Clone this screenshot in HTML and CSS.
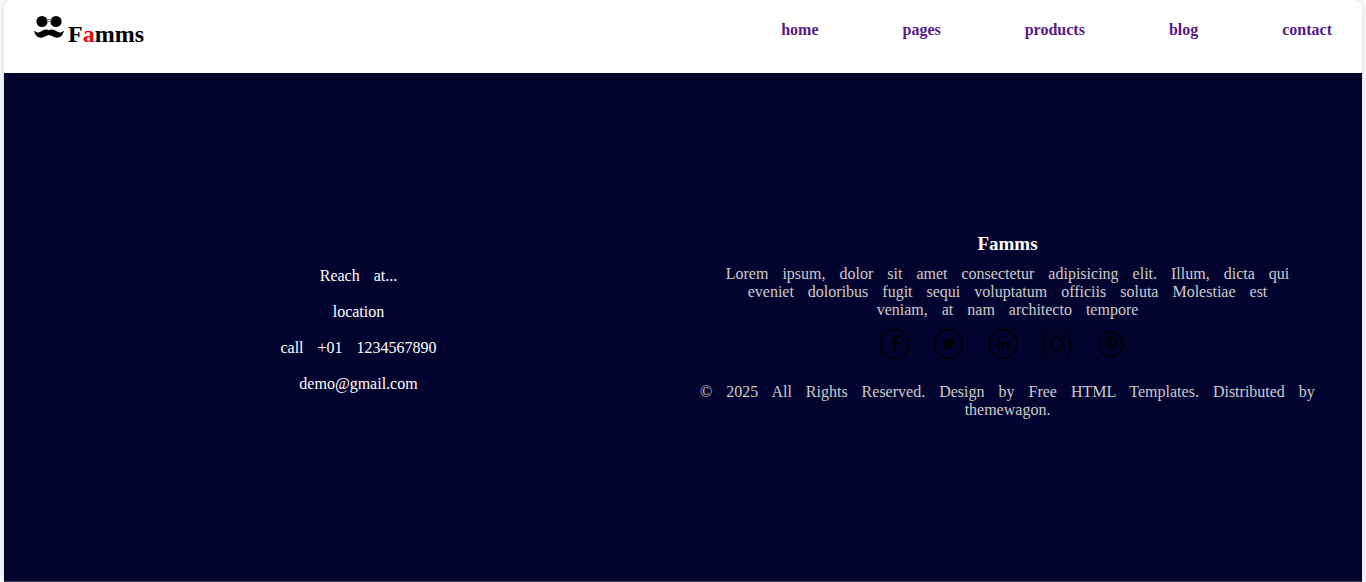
FILE: index.html
```html
<!DOCTYPE html>
<html lang="en">
<head>
<meta charset="utf-8">
<title>Famms</title>
<link rel="stylesheet" href="styles.css">
</head>
<body>
<div class="page">
  <header class="header">
    <div class="brand">
      <svg class="brand-mark" viewBox="0 0 30 24" aria-hidden="true">
        <circle cx="8" cy="6.500" r="5.600"/>
        <circle cx="22" cy="6.500" r="5.600"/>
        <path class="bridge" d="M12 4.500h6M12.500 6.500h5"/>
        <path d="M.3 15.300c1.400 2.200 3.200 2.600 5.500 1.600 2.500-1.100 4.300-2.500 6.500-2.500 1.200 0 2.100.4 2.700 1 .6-.6 1.500-1 2.700-1 2.200 0 4 1.400 6.500 2.500 2.300 1 4.100.6 5.500-1.600-.1 4.600-3 7.400-7 7.400-3.300 0-5.200-2.600-7.700-2.600s-4.400 2.600-7.700 2.600c-4 0-6.900-2.800-7-7.400z"/>
      </svg>
      <span class="brand-name">F<span class="brand-accent">a</span>mms</span>
    </div>
    <nav class="nav">
      <a href="#">home</a>
      <a href="#">pages</a>
      <a href="#">products</a>
      <a href="#">blog</a>
      <a href="#">contact</a>
    </nav>
  </header>
  <footer class="footer">
    <address class="reach">
      <p>Reach at...</p>
      <p>location</p>
      <p>call +01 1234567890</p>
      <p>demo@gmail.com</p>
    </address>
    <section class="about">
      <h3>Famms</h3>
      <p class="summary">Lorem ipsum, dolor sit amet consectetur adipisicing elit. Illum, dicta qui eveniet doloribus fugit sequi voluptatum officiis soluta Molestiae est veniam, at nam architecto tempore</p>
      <div class="social">
        <a href="#" aria-label="Facebook"><svg viewBox="0 0 30 30"><circle class="line" cx="15" cy="15" r="14.200"/><path d="M13.200 23.500v-7.700h-2.300v-3h2.300v-2.300c0-2.700 1.500-4 3.900-4 .8 0 1.500.1 1.900.2v2.600h-1.400c-1.200 0-1.500.6-1.500 1.600v1.900h2.800l-.4 3h-2.400v7.700z"/></svg></a>
        <a href="#" aria-label="Twitter"><svg viewBox="0 0 30 30"><circle class="line" cx="15" cy="15" r="14.200"/><path d="M22 10.500c-.5.200-1 .4-1.600.5.600-.4 1-.9 1.200-1.500-.5.300-1.100.5-1.700.7a2.900 2.900 0 0 0-5 2.600c-2.300-.1-4.400-1.200-5.800-3a2.900 2.900 0 0 0 .9 3.800c-.5 0-.9-.2-1.300-.4 0 1.400 1 2.600 2.300 2.800-.4.100-.8.100-1.300.1.400 1.100 1.400 2 2.700 2a5.700 5.700 0 0 1-4.100 1.200c4.900 3.100 12.400.4 12.200-7.300.6-.4 1.100-.9 1.500-1.500z"/></svg></a>
        <a href="#" aria-label="LinkedIn"><svg viewBox="0 0 30 30"><circle class="line" cx="15" cy="15" r="14.200"/><circle cx="10.800" cy="10.700" r="1.300"/><path d="M9.600 13H12v7.200H9.600zM13.600 13h2.300v1c.4-.7 1.200-1.200 2.200-1.200 2.300 0 3 1.400 3 3.500v3.900h-2.400v-3.500c0-1.100-.3-1.700-1.200-1.700s-1.500.6-1.500 1.700v3.500h-2.400z"/></svg></a>
        <a href="#" aria-label="Instagram"><svg viewBox="0 0 30 30"><path class="hairline" d="M4.500 1.500h21M4.500 28.500h21"/><path d="M3 4V26C.3 22.500.3 7.500 3 4zM27 4V26c2.700-3.500 2.700-18.500 0-22z"/><path class="line" d="M2.500 4.500l2-3M27.500 4.500l-2-3M2.500 25.500l2 3M27.500 25.500l-2 3"/><circle class="ring" cx="15" cy="15" r="6"/><circle cx="22.500" cy="7.500" r="1.800"/></svg></a>
        <a href="#" aria-label="Pinterest"><svg viewBox="0 0 30 30"><circle class="line" cx="15" cy="15" r="12.200"/><path class="stroke" d="M11 16.500c-3.200-4 .3-8 4.300-8 4.300 0 6 3.400 4.800 6.500-1 3-4.600 3.900-6 1.600M15.400 11.800L12.500 22"/></svg></a>
      </div>
      <p class="copyright">© 2025 All Rights Reserved. Design by Free HTML Templates. Distributed by themewagon.</p>
    </section>
  </footer>
</div>
</body>
</html>
```
FILE: styles.css
```css
* {
  box-sizing: border-box;
}

body {
  margin: 0;
  padding: 0 4px;
  background: #fff;
  font: 16px/18px "Liberation Serif", "Times New Roman", serif;
}

h3,
p {
  margin: 0;
}

.page {
  display: flex;
  flex-direction: column;
  min-height: 100vh;
  border-bottom: 1px solid #41415f;
  border-radius: 8px 8px 0 0;
  box-shadow: 0 0 8px rgba(0, 0, 0, 0.2);
}

.header {
  display: flex;
  justify-content: space-between;
  align-items: flex-start;
  padding: 15px 30px 25px;
}

.brand {
  display: flex;
  gap: 4px;
}

.brand-mark {
  width: 30px;
  height: 24px;
}

.bridge {
  fill: none;
  stroke: #777;
}

.brand-name {
  padding-top: 5px;
  font-size: 24px;
  font-weight: bold;
  line-height: 28px;
}

.brand-accent {
  color: #f00;
}

.nav {
  display: flex;
  gap: 84px;
  padding-top: 6px;
  font-weight: bold;
}

.nav a {
  color: #551a8b;
  text-decoration: none;
}

.footer {
  flex: 1;
  display: grid;
  grid-template-columns: 1fr 1fr;
  align-items: center;
  padding: 0 30px 2px;
  background: #030330;
  color: #fff;
  text-align: center;
  word-spacing: 10px;
}

.reach {
  display: grid;
  gap: 18px;
  padding-top: 8px;
  font-style: normal;
}

.about {
  display: flex;
  flex-direction: column;
  align-items: center;
}

.about h3 {
  margin-bottom: 10px;
  font-size: 19px;
  line-height: 22px;
}

.summary {
  max-width: 580px;
  color: #ccc;
}

.social {
  display: flex;
  gap: 24px;
  margin: 10px 0 24px;
  padding-right: 9px;
}

.social svg {
  display: block;
  width: 30px;
  height: 30px;
}

.line,
.hairline,
.ring,
.stroke {
  fill: none;
  stroke: #000;
  stroke-width: 1.5;
}

.hairline {
  stroke-width: 1;
  stroke-opacity: 0.5;
}

.ring,
.stroke {
  stroke-width: 2;
}

.copyright {
  max-width: 640px;
  color: #ccc;
}
```
